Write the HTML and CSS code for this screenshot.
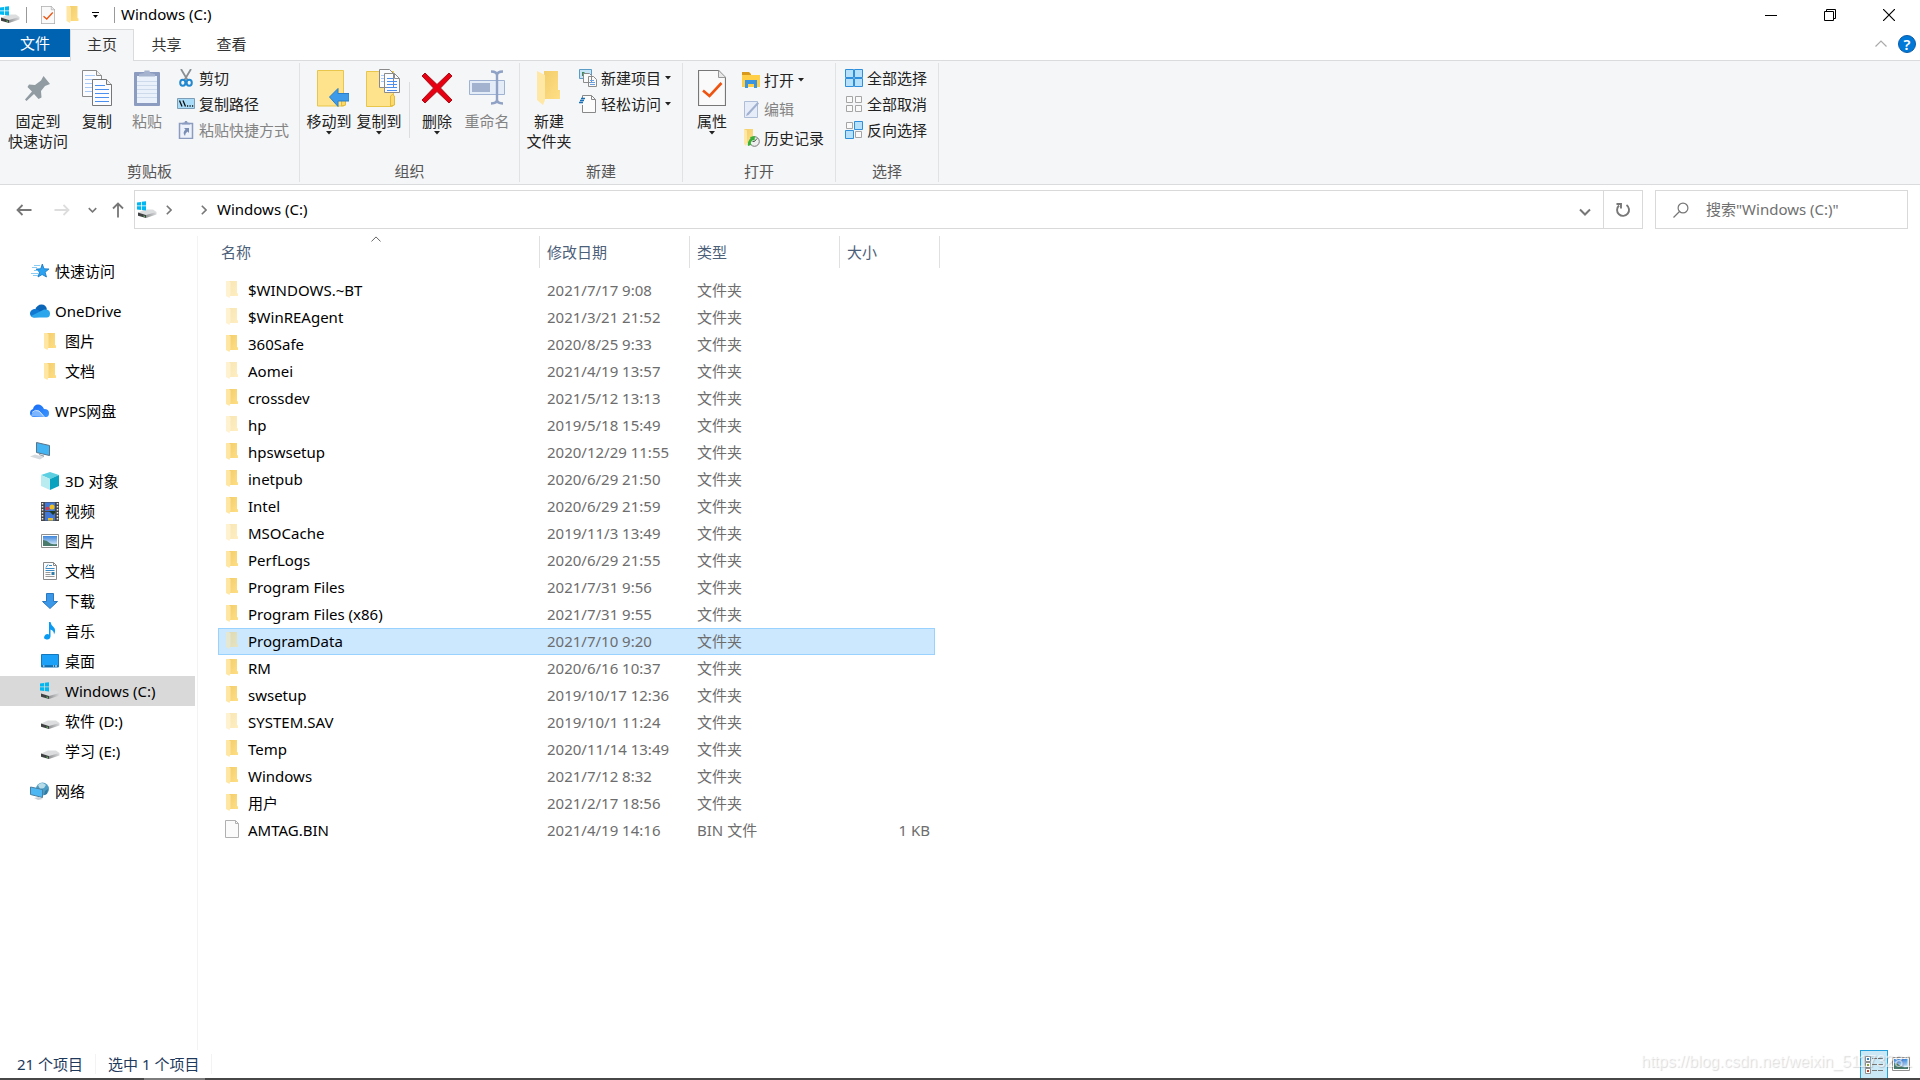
FILE: index.html
```html
<!DOCTYPE html>
<html lang="zh-CN">
<head>
  <meta charset="UTF-8" />
  <meta name="viewport" content="width=device-width, initial-scale=1.0" />
  <title>Windows (C:)</title>
  <link rel="stylesheet" href="styles.css">
</head>
<body>
  <!-- Icon sprite -->
  <svg class="sprite" width="0" height="0" aria-hidden="true">
    <defs>
      <linearGradient id="gFold" x1="0" y1="0" x2="1" y2="1"><stop offset="0" stop-color="#f2cd6c"/><stop offset="1" stop-color="#ffdf85"/></linearGradient>
      <linearGradient id="gDrive" x1="0" y1="0" x2="1" y2="0"><stop offset="0" stop-color="#8f9193"/><stop offset="1" stop-color="#d9dadb"/></linearGradient>
      <linearGradient id="gSky" x1="0" y1="0" x2="0" y2="1"><stop offset="0" stop-color="#3f86dc"/><stop offset="1" stop-color="#e6f4fb"/></linearGradient>
      <linearGradient id="gWps" x1="0" y1="0" x2="1" y2="1"><stop offset="0" stop-color="#1668f5"/><stop offset="1" stop-color="#3b97ff"/></linearGradient>
    </defs>
    <symbol id="drive" viewBox="0 0 20 18">
      <path d="M1 11.5 8 8.5h8l3.5 2.5-8 3.5z" fill="#dcddde"/>
      <path d="M1 11.5v3.200l8 2.300v-3z" fill="#3f4143"/>
      <path d="M9 14v3l10.500-3.500V11z" fill="url(#gDrive)"/>
      <path d="M6.500 14.500l1.500.4v.9l-1.500-.4z" fill="#6fe36a"/>
    </symbol>
    <symbol id="windrive" viewBox="0 0 20 18">
      <use href="#drive" width="20" height="18"/>
      <path d="M0 1.500l4-.6v3.600H0zM4.800.800 9 .2v4.300H4.800zM0 5.300h4v3.600l-4-.5zM4.800 5.300H9v4.300l-4.200-.6z" fill="#00b7f1"/>
    </symbol>
    <symbol id="folder" viewBox="0 0 12 17">
      <path d="M3 0h8v12l1 .5v2.500H4z" fill="url(#gFold)"/>
      <path d="M0 0h3l1.500 1.500V13.500L3.500 17 0 15z" fill="#ffe7a3"/>
    </symbol>
    <symbol id="check" viewBox="0 0 28 36">
      <path d="M.5.5h20l7 7v28H.5z" fill="#fafafa" stroke="#777" stroke-width="1.200"/>
      <path d="M20.500.5v7h7" fill="#e8e8e8" stroke="#999"/>
      <path d="M5 20.500l6.500 5.500L23.500 13" fill="none" stroke="#ee5411" stroke-width="2.600"/>
    </symbol>
    <symbol id="page" viewBox="0 0 14 18">
      <path d="M.5.5h10l3 3v14H.5z" fill="#fbfbfb" stroke="#b0b0b0"/>
      <path d="M10.500.5v3h3" fill="none" stroke="#b0b0b0"/>
    </symbol>
    <symbol id="pin" viewBox="0 0 26 26">
      <path d="M18.500 1 25 9l-5 2-4 5 .5 6.500-3 1.500-4.500-5L1.500 26 0 24.500 7 16.500 2.500 12 4 9.500l6 .5 6-4.500z" fill="#909ba2"/>
    </symbol>
    <symbol id="copy" viewBox="0 0 30 36">
      <g fill="#fafcff" stroke="#8b8b8b"><path d="M.5.5h14l5 5v21H.5z"/><path d="M14.500.5v5h5" fill="#eee"/></g>
      <path d="M3 5.500h10M3 9.500h14M3 13.500h14M3 17.500h14M3 21.500h14" stroke="#a8c8f5"/>
      <g fill="#fafcff" stroke="#777"><path d="M10.500 9.500h14l5 5v21h-19z"/><path d="M24.500 9.500v5h5" fill="#eee"/></g>
      <path d="M13 15.500h10M13 19.500h14M13 23.500h14M13 27.500h14M13 31.500h14" stroke="#4a8ef0"/>
    </symbol>
    <symbol id="paste" viewBox="0 0 26 36">
      <rect y="2" width="26" height="34" rx="1" fill="#8b9cc0"/>
      <path d="M3 6h20v27H3z" fill="#eaf1fa"/>
      <path d="M3 11.500h20M3 15.500h20M3 19.500h20M3 23.500h20M3 27.500h20" stroke="#cddaec"/>
      <path d="M5 6.500V4l5-1 .5-2.500h5L16 3l5 1v2.500z" fill="#a5b3cf"/>
    </symbol>
    <symbol id="cut" viewBox="0 0 18 18">
      <path d="M4 0l6.500 11M14 0 7.500 11" stroke="#8a8f94" stroke-width="1.800"/>
      <g fill="none" stroke="#2288cf" stroke-width="2"><ellipse cx="5.800" cy="13.800" rx="2.600" ry="3"/><ellipse cx="12.200" cy="13.800" rx="2.600" ry="3"/></g>
    </symbol>
    <symbol id="path" viewBox="0 0 18 18">
      <path d="M.5 3.500h17v10H.5z" fill="#a9dcf8" stroke="#7c9db5"/>
      <path d="M2.500 5.500l2.500 6M6 5.500l2.500 6M10 11h1.200M12.500 11h1.200M15 11h1.200" stroke="#111" stroke-width="1.300"/>
    </symbol>
    <symbol id="shortcut" viewBox="0 0 18 18">
      <path d="M2.500 2.500h13v15h-13z" fill="#edf2fa" stroke="#8b9cc0" stroke-width="1.500"/>
      <path d="M5 3.500V2l2.500-.5L8 0h2l.5 1.500L13 2v1.500z" fill="#8b9cc0"/>
      <path d="M7 7h5v5l-1.500-1.500Q8 12 8 15 5 11.500 8.500 8.500z" fill="#7a8db5"/>
    </symbol>
    <symbol id="move" viewBox="0 0 32 37">
      <path d="M.5.5h26v31l2-1V35l-2 1H.5z" fill="#fee28c" stroke="#e8c64b"/>
      <path d="M24.500 36V25q2-3 4 0v10z" fill="#fcd96d" stroke="#e2bc3d"/>
      <path d="M12.500 27 21 18.500v5h11v7.500H21v5.500z" fill="#3d9be9" stroke="#2b7fc8"/>
    </symbol>
    <symbol id="copyto" viewBox="0 0 34 38">
      <path d="M.5 2.500h27v33l-1 2H.5z" fill="#fee28c" stroke="#e8c64b"/>
      <path d="M24.500 37V27q2-3 4 0v9z" fill="#fcd96d" stroke="#e2bc3d"/>
      <g fill="#fafcff" stroke="#8a8a8a"><path d="M13.500.5h10l4 4v14h-14zM18.500 4.500h10l5 5v14h-15z"/></g>
      <path d="M28.500 4.500v5h5" fill="none" stroke="#8a8a8a"/>
      <path d="M21 9.500h6M21 12.500h10M21 15.500h10M21 18.500h10M21 21.500h10" stroke="#4a8ef0"/>
      <path d="M15 6.500h3M15 9.500h3M15 12.500h3" stroke="#a8c8f5"/>
    </symbol>
    <symbol id="del" viewBox="0 0 32 32">
      <path d="M4 1 16 12.500 28 1l3 3-11.500 12L31 28l-3 3L16 19.500 4 31l-3-3L12.500 16 1 4z" fill="#e60012" stroke="#a31018"/>
    </symbol>
    <symbol id="rename" viewBox="0 0 36 36">
      <path d="M.5 10.500h35v14H.5z" fill="#e4ecf8" stroke="#9fb2d3"/>
      <path d="M3 13h18v9H3z" fill="#a3b2cf"/>
      <path d="M22 1.500q6 0 6 4v24q0 4-6 4M34 1.500q-6 0-6 4v24q0 4 6 4" fill="none" stroke="#8fa1c4" stroke-width="2.400"/>
    </symbol>
    <symbol id="bigfolder" viewBox="0 0 25 36">
      <path d="M7 1h14v19h2v9H7z" fill="url(#gFold)"/>
      <path d="M0 1l8 4v25l-2 5-6-5z" fill="#ffe8a6"/>
    </symbol>
    <symbol id="newitem" viewBox="0 0 18 18">
      <path d="M.5.5h12v9H.5z" fill="#c6e6f7" stroke="#5a9cc5"/><path d="M3 7V3h2.500v4z" fill="#3d8a5c"/>
      <g fill="#fafafa" stroke="#8b8b8b"><path d="M4.500 4.500h6l2 2v7h-8zM9.500 7.500h5l3 3v7h-8z"/></g>
      <path d="M11 11.500h4M11 13.500h5M11 15.500h5" stroke="#6a9fe0"/>
    </symbol>
    <symbol id="easy" viewBox="0 0 18 18">
      <path d="M3.500 3V.5h9l4 4v13h-13V10" fill="#fcfcfc" stroke="#888"/><path d="M12.500.5v4h4" fill="none" stroke="#888"/>
      <path d="M2 3.500h4M1 5.500h4M0 7.500h4" stroke="#1a6fb5" stroke-width="1.300"/>
    </symbol>
    <symbol id="open" viewBox="0 0 18 18">
      <path d="M0 2h7l2 2h9v12H0z" fill="#ffcf48"/><path d="M0 1h7l2 2v1H0z" fill="#d99a1c"/>
      <path d="M3 9h12v8h-3v-4H6v4H3z" fill="#3c93de"/>
    </symbol>
    <symbol id="edit" viewBox="0 0 18 18">
      <path d="M2.500 1.500h13v16h-13z" fill="#e6edf8" stroke="#aebdd8"/><path d="M15.500 2 17 3.500 6.500 15 4 16l1-2.500z" fill="#a0b0cf"/>
    </symbol>
    <symbol id="history" viewBox="0 0 18 18">
      <path d="M2 0h9v14H4z" fill="url(#gFold)"/><path d="M2 0l3 1.500V15l-1 2-2-2z" fill="#ffe8a6"/>
      <circle cx="12.500" cy="12.500" r="4.800" fill="#eee" stroke="#777"/><path d="M12.500 12.500l2.500-3M12.500 12.500h-2" stroke="#555"/>
      <path d="M6 17q-1-5 3-7.500l-1-1.500 5-1-.5 5-1.500-1q-3 2-2 5z" fill="#35b235"/>
    </symbol>
    <symbol id="selall" viewBox="0 0 18 18">
      <g fill="#b7e1fb" stroke="#2f8fdb"><path d="M.5.500h8v8h-8zM9.500.500h8v8h-8zM.5 9.500h8v8h-8zM9.500 9.500h8v8h-8z"/></g>
    </symbol>
    <symbol id="selnone" viewBox="0 0 18 18">
      <g fill="#fafafa" stroke="#a5a5a5"><path d="M1.500 1.500h6v6h-6zM10.500 1.500h6v6h-6zM1.500 10.500h6v6h-6zM10.500 10.500h6v6h-6z"/></g>
    </symbol>
    <symbol id="selinv" viewBox="0 0 18 18">
      <g fill="#fafafa" stroke="#a5a5a5"><path d="M1.500 1.500h6v6h-6zM10.500 10.500h6v6h-6z"/></g>
      <g fill="#b7e1fb" stroke="#2f8fdb"><path d="M9.500.500h8v8h-8zM.5 9.500h8v8h-8z"/></g>
    </symbol>
    <symbol id="star" viewBox="0 0 20 18">
      <path d="M12.300 2l1.700 4.800 5 .2-3.900 3.200L16.500 15l-4.400-2.500L8 15l1.500-4.900-3.400-3 4.600-.3z" fill="#2ba3f0" stroke="#1176c4" stroke-width=".8"/>
      <path d="M4 3.500h6M2 5.500h5M4 8.500h4M1 11.500h7M3 13.500h5" stroke="#6dbff2" stroke-width=".8"/>
    </symbol>
    <symbol id="onedrive" viewBox="0 0 20 14">
      <path d="M5 6Q7 .5 11.500.5T17 5.500L9 9z" fill="#0a64b8"/><path d="M4 13.500q-4-.5-4-4T4 5q3-.5 5 1.500l6 6z" fill="#1279d3"/>
      <path d="M4 13.500q-2 0-3-1.500l13-6.500q6-.5 6 4t-4 4z" fill="#2ba5ec"/>
    </symbol>
    <symbol id="wps" viewBox="0 0 20 14">
      <path d="M4 13q-4-.3-4-4 0-3 3-4Q4 .5 8 .5t6 4.500q5 0 5 4T16 13z" fill="url(#gWps)"/>
      <path d="M1 12Q3 6 8 6.500q3 .5 6 6.500z" fill="#7db6ff"/>
      <path d="M2 8.500q3-3.500 7-1.500l5.500 6" fill="none" stroke="#e6f1ff" stroke-width=".8"/>
    </symbol>
    <symbol id="pc" viewBox="0 0 20 18">
      <path d="M6.500.5l13 3v10l-13-3z" fill="#44b4f2" stroke="#5a7388"/><path d="M0 14.500l5-2 9 2.500-4 2.500z" fill="#d5dade"/><path d="M9 12l5 1.500v1.500l-5-2z" fill="#98a4ad"/>
    </symbol>
    <symbol id="cube" viewBox="0 0 18 18">
      <path d="M9 0l9 3-9 4-9-4z" fill="#5cd0e0"/><path d="M0 3l9 4v11l-9-4z" fill="#b9ecf1"/><path d="M18 3 9 7v11l9-4z" fill="#0ba2bf"/>
    </symbol>
    <symbol id="video" viewBox="0 0 18 19">
      <path d="M0 0h18v19H0z" fill="#474747"/><path d="M4 .5h10v8.500H4zM4 10h10v8.500H4z" fill="#4178d8"/>
      <path d="M1.500 1v18M16.500 1v18" stroke="#eee" stroke-dasharray="1.500 1.500" stroke-width="1.500"/>
      <circle cx="11" cy="5" r="2.500" fill="#eebf25"/><circle cx="6.500" cy="6.500" r="1.800" fill="#d9374a"/><path d="M8 9h6v2l-2 2z" fill="#1e3d24"/><path d="M7 16h5v2.500H7z" fill="#e8c02e"/>
    </symbol>
    <symbol id="pic" viewBox="0 0 18 14">
      <path d="M.5.500h17v13H.5z" fill="#fff" stroke="#909090"/><path d="M2 2h14v10H2z" fill="url(#gSky)"/><path d="M2 6q4 0 6 2.500t8 1.500v2H2z" fill="#4a7a6c"/>
    </symbol>
    <symbol id="doc" viewBox="0 0 14 18">
      <path d="M.5.500h10l3 3v14H.5z" fill="#fcfcfc" stroke="#888"/><path d="M10.500.5v3h3" fill="none" stroke="#888"/>
      <path d="M3 5.500 5 2.500M6 3.500h3M2.500 6.500h9M2.500 8.500h9" stroke="#3a8ac5"/><path d="M2.500 10.500h5M2.500 12.500h5M2.500 14.500h9" stroke="#999"/><path d="M8.500 10h3v3h-3z" fill="#2f7eaa"/>
    </symbol>
    <symbol id="down" viewBox="0 0 16 16">
      <path d="M4.500.5h7v8h4L8 15.500.5 8.500h4z" fill="#3b97e8" stroke="#2a78c0"/>
    </symbol>
    <symbol id="music" viewBox="0 0 12 18">
      <path d="M5 0h1.500q.5 3 3 5 3 3 .5 7.500 0-4-3.500-5V14.500Q6 18 2.500 17.500T.5 14 5 12.500z" fill="#0a9af2"/>
    </symbol>
    <symbol id="desk" viewBox="0 0 18 14">
      <path d="M.5.500h17v12.500H.5z" fill="#1ba1f8" stroke="#1279bd"/><path d="M1 12h16" stroke="#0b4d7c"/><path d="M2 12h1.500M12 12h1M14 12h2" stroke="#fff"/>
    </symbol>
    <symbol id="net" viewBox="0 0 20 18">
      <circle cx="12.500" cy="7" r="6.500" fill="#4b9cc4"/><path d="M8 3q4-4 8 0l-2 3-4 1z" fill="#b8dbe8"/><path d="M15 9l3-2-1 5-3 1z" fill="#2f7ba3"/><path d="M.5 5l12 2.500v8l-12-3z" fill="#4db7f3" stroke="#4a7f9f"/><path d="M4 16l5-1 4 2-5 1z" fill="#c9d0d5"/>
    </symbol>
    <symbol id="details" viewBox="0 0 18 18">
      <path d="M.5.500h5v5h-5zM.5 6.500h5v5h-5zM.5 12.500h5v5h-5z" fill="#fff" stroke="#909090"/>
      <path d="M2 3h2" stroke="#2b82d9" stroke-width="2"/><path d="M2 9h2" stroke="#85a32e" stroke-width="2"/><path d="M2 15h2" stroke="#c63d22" stroke-width="2"/>
      <path d="M7 2.500h5M13 2.500h5M7 8.500h5M13 8.500h5M7 14.500h5M13 14.500h5" stroke="#777"/>
    </symbol>
    <symbol id="back" viewBox="0 0 16 12"><path d="M15.500 6H1.500M6.500 1l-5 5 5 5" fill="none" stroke="currentColor" stroke-width="1.800"/></symbol>
    <symbol id="fwd" viewBox="0 0 16 12"><path d="M.5 6h14M9.500 1l5 5-5 5" fill="none" stroke="currentColor" stroke-width="1.800"/></symbol>
    <symbol id="up" viewBox="0 0 12 16"><path d="M6 15.500V1.500M1 6.500l5-5 5 5" fill="none" stroke="currentColor" stroke-width="1.800"/></symbol>
    <symbol id="chev" viewBox="0 0 12 8"><path d="M1 1.500l5 5 5-5" fill="none" stroke="currentColor" stroke-width="2"/></symbol>
    <symbol id="chevup" viewBox="0 0 12 7"><path d="M.5 6.500 6 1l5.500 5.500" fill="none" stroke="currentColor" stroke-width="1.200"/></symbol>
    <symbol id="next" viewBox="0 0 6 10"><path d="M.8.8 5 5 .8 9.200" fill="none" stroke="currentColor" stroke-width="1.600"/></symbol>
    <symbol id="arrow" viewBox="0 0 6 4"><path d="M0 0h6L3 3.500z" fill="#222"/></symbol>
  </svg>

  <header class="titlebar">
    <svg class="app-icon" width="20" height="18"><use href="#windrive"/></svg>
    <span class="bar"></span>
    <button class="quick" aria-label="属性"><svg width="14" height="18"><use href="#check"/></svg></button>
    <button class="quick" aria-label="新建文件夹"><svg width="13" height="17"><use href="#folder"/></svg></button>
    <button class="quick" aria-label="自定义快速访问工具栏"><svg width="8" height="8" viewBox="0 0 8 8"><path d="M0 1.500h7" stroke="#000"/><path d="M1 4h5L3.500 7z"/></svg></button>
    <span class="bar"></span>
    <h1>Windows (C:)</h1>
    <div class="window-buttons">
      <button aria-label="最小化"><svg width="12" height="12"><path d="M0 6.500h12" stroke="#000"/></svg></button>
      <button aria-label="还原"><svg width="12" height="12"><path d="M.5 2.500h9v9h-9zM2.500 2V.5h9v9H10" fill="none" stroke="#000"/></svg></button>
      <button aria-label="关闭"><svg width="12" height="12"><path d="M0 0l12 12M12 0 0 12" stroke="#000" stroke-width="1.200"/></svg></button>
    </div>
  </header>

  <div class="tabs">
    <button class="tab file">文件</button>
    <button class="tab active">主页</button>
    <button class="tab">共享</button>
    <button class="tab">查看</button>
    <div class="tab-tools">
      <button aria-label="最小化功能区"><svg width="12" height="7"><use href="#chevup"/></svg></button>
      <button class="help" aria-label="帮助">?</button>
    </div>
  </div>

  <div class="ribbon">
    <section class="group">
      <div class="tools">
        <button class="big wide"><svg width="26" height="26"><use href="#pin"/></svg>固定到<br>快速访问</button>
        <button class="big"><svg width="30" height="36"><use href="#copy"/></svg>复制</button>
        <button class="big off"><svg width="26" height="36"><use href="#paste"/></svg>粘贴</button>
        <div class="stack">
          <button><svg width="18" height="18"><use href="#cut"/></svg>剪切</button>
          <button><svg width="18" height="18"><use href="#path"/></svg>复制路径</button>
          <button class="off"><svg width="18" height="18"><use href="#shortcut"/></svg>粘贴快捷方式</button>
        </div>
      </div>
      <h2>剪贴板</h2>
    </section>
    <section class="group">
      <div class="tools">
        <button class="big"><svg width="40" height="37" viewBox="-8 0 40 37"><use href="#move" width="32" height="37"/></svg>移动到<svg class="drop" width="6" height="4"><use href="#arrow"/></svg></button>
        <button class="big"><svg width="42" height="38" viewBox="-8 0 42 38"><use href="#copyto" width="34" height="38"/></svg>复制到<svg class="drop" width="6" height="4"><use href="#arrow"/></svg></button>
        <span class="divider"></span>
        <button class="big"><svg width="32" height="32"><use href="#del"/></svg>删除<svg class="drop" width="6" height="4"><use href="#arrow"/></svg></button>
        <button class="big off"><svg width="36" height="36"><use href="#rename"/></svg>重命名</button>
      </div>
      <h2>组织</h2>
    </section>
    <section class="group">
      <div class="tools">
        <button class="big"><svg width="25" height="36"><use href="#bigfolder"/></svg>新建<br>文件夹</button>
        <div class="stack">
          <button><svg width="18" height="18"><use href="#newitem"/></svg>新建项目<svg width="6" height="4"><use href="#arrow"/></svg></button>
          <button><svg width="18" height="18"><use href="#easy"/></svg>轻松访问<svg width="6" height="4"><use href="#arrow"/></svg></button>
        </div>
      </div>
      <h2>新建</h2>
    </section>
    <section class="group">
      <div class="tools">
        <button class="big"><svg width="28" height="36"><use href="#check"/></svg>属性<svg class="drop" width="6" height="4"><use href="#arrow"/></svg></button>
        <div class="stack loose">
          <button><svg width="18" height="18"><use href="#open"/></svg>打开<svg width="6" height="4"><use href="#arrow"/></svg></button>
          <button class="off"><svg width="18" height="18"><use href="#edit"/></svg>编辑</button>
          <button><svg width="18" height="18"><use href="#history"/></svg>历史记录</button>
        </div>
      </div>
      <h2>打开</h2>
    </section>
    <section class="group">
      <div class="tools">
        <div class="stack">
          <button><svg width="18" height="18"><use href="#selall"/></svg>全部选择</button>
          <button><svg width="18" height="18"><use href="#selnone"/></svg>全部取消</button>
          <button><svg width="18" height="18"><use href="#selinv"/></svg>反向选择</button>
        </div>
      </div>
      <h2>选择</h2>
    </section>
  </div>

  <div class="navrow">
    <div class="history">
      <button aria-label="后退"><svg width="16" height="12"><use href="#back"/></svg></button>
      <button class="faded" aria-label="前进"><svg width="16" height="12"><use href="#fwd"/></svg></button>
      <button class="slim" aria-label="最近浏览的位置"><svg width="9" height="6"><use href="#chev"/></svg></button>
      <button class="slim" aria-label="上移"><svg width="12" height="16"><use href="#up"/></svg></button>
    </div>
    <div class="address">
      <svg width="20" height="18"><use href="#windrive"/></svg>
      <svg class="sep" width="6" height="10"><use href="#next"/></svg>
      <svg class="sep far" width="6" height="10"><use href="#next"/></svg>
      <a href="#">Windows (C:)</a>
      <button class="expand" aria-label="以前的位置"><svg width="12" height="8"><use href="#chev"/></svg></button>
      <button class="refresh" aria-label="刷新"><svg width="16" height="16" viewBox="0 0 16 16"><path d="M11.500 3A6 6 0 1 1 4 3.500M1.500 2h4.500v4.500" fill="none" stroke="#777" stroke-width="1.900"/></svg></button>
    </div>
    <label class="search">
      <svg width="16" height="16" viewBox="0 0 16 16"><path d="M.5 15.500 7 9" stroke="#777" stroke-width="1.200"/><circle cx="10" cy="6" r="4.900" fill="none" stroke="#777" stroke-width="1.200"/></svg>
      <input type="text" placeholder='搜索"Windows (C:)"' aria-label="搜索">
    </label>
  </div>

  <main>
    <nav class="sidebar">
      <ul>
        <li><a href="#"><svg width="20" height="18"><use href="#star"/></svg>快速访问</a></li>
      </ul>
      <ul>
        <li><a href="#"><svg width="20" height="14"><use href="#onedrive"/></svg>OneDrive</a></li>
        <li><a class="sub" href="#"><svg width="20" height="17"><use href="#folder"/></svg>图片</a></li>
        <li><a class="sub" href="#"><svg width="20" height="17"><use href="#folder"/></svg>文档</a></li>
      </ul>
      <ul>
        <li><a href="#"><svg width="20" height="14"><use href="#wps"/></svg>WPS网盘</a></li>
      </ul>
      <ul>
        <li><a href="#" aria-label="此电脑"><svg width="20" height="18"><use href="#pc"/></svg></a></li>
        <li><a class="sub" href="#"><svg width="20" height="18"><use href="#cube"/></svg>3D 对象</a></li>
        <li><a class="sub" href="#"><svg width="20" height="19"><use href="#video"/></svg>视频</a></li>
        <li><a class="sub" href="#"><svg width="20" height="14"><use href="#pic"/></svg>图片</a></li>
        <li><a class="sub" href="#"><svg width="20" height="18"><use href="#doc"/></svg>文档</a></li>
        <li><a class="sub" href="#"><svg width="20" height="16"><use href="#down"/></svg>下载</a></li>
        <li><a class="sub" href="#"><svg width="20" height="18"><use href="#music"/></svg>音乐</a></li>
        <li><a class="sub" href="#"><svg width="20" height="14"><use href="#desk"/></svg>桌面</a></li>
        <li><a class="sub current" href="#"><svg width="20" height="18"><use href="#windrive"/></svg>Windows (C:)</a></li>
        <li><a class="sub" href="#"><svg width="20" height="18"><use href="#drive"/></svg>软件 (D:)</a></li>
        <li><a class="sub" href="#"><svg width="20" height="18"><use href="#drive"/></svg>学习 (E:)</a></li>
      </ul>
      <ul>
        <li><a href="#"><svg width="20" height="18"><use href="#net"/></svg>网络</a></li>
      </ul>
    </nav>

    <div class="files">
      <table>
        <colgroup><col class="c-name"><col class="c-date"><col class="c-type"><col class="c-size"><col class="c-end"></colgroup>
        <thead>
          <tr><th>名称<svg class="sort" width="10" height="6"><use href="#chevup"/></svg></th><th>修改日期</th><th>类型</th><th colspan="2">大小</th></tr>
        </thead>
        <tbody>
          <tr class="hidden-item"><td><svg width="14" height="17"><use href="#folder"/></svg>$WINDOWS.~BT</td><td>2021/7/17 9:08</td><td>文件夹</td><td></td></tr>
          <tr class="hidden-item"><td><svg width="14" height="17"><use href="#folder"/></svg>$WinREAgent</td><td>2021/3/21 21:52</td><td>文件夹</td><td></td></tr>
          <tr><td><svg width="14" height="17"><use href="#folder"/></svg>360Safe</td><td>2020/8/25 9:33</td><td>文件夹</td><td></td></tr>
          <tr class="hidden-item"><td><svg width="14" height="17"><use href="#folder"/></svg>Aomei</td><td>2021/4/19 13:57</td><td>文件夹</td><td></td></tr>
          <tr><td><svg width="14" height="17"><use href="#folder"/></svg>crossdev</td><td>2021/5/12 13:13</td><td>文件夹</td><td></td></tr>
          <tr class="hidden-item"><td><svg width="14" height="17"><use href="#folder"/></svg>hp</td><td>2019/5/18 15:49</td><td>文件夹</td><td></td></tr>
          <tr><td><svg width="14" height="17"><use href="#folder"/></svg>hpswsetup</td><td>2020/12/29 11:55</td><td>文件夹</td><td></td></tr>
          <tr><td><svg width="14" height="17"><use href="#folder"/></svg>inetpub</td><td>2020/6/29 21:50</td><td>文件夹</td><td></td></tr>
          <tr><td><svg width="14" height="17"><use href="#folder"/></svg>Intel</td><td>2020/6/29 21:59</td><td>文件夹</td><td></td></tr>
          <tr class="hidden-item"><td><svg width="14" height="17"><use href="#folder"/></svg>MSOCache</td><td>2019/11/3 13:49</td><td>文件夹</td><td></td></tr>
          <tr><td><svg width="14" height="17"><use href="#folder"/></svg>PerfLogs</td><td>2020/6/29 21:55</td><td>文件夹</td><td></td></tr>
          <tr><td><svg width="14" height="17"><use href="#folder"/></svg>Program Files</td><td>2021/7/31 9:56</td><td>文件夹</td><td></td></tr>
          <tr><td><svg width="14" height="17"><use href="#folder"/></svg>Program Files (x86)</td><td>2021/7/31 9:55</td><td>文件夹</td><td></td></tr>
          <tr class="hidden-item selected"><td><svg width="14" height="17"><use href="#folder"/></svg>ProgramData</td><td>2021/7/10 9:20</td><td>文件夹</td><td></td></tr>
          <tr><td><svg width="14" height="17"><use href="#folder"/></svg>RM</td><td>2020/6/16 10:37</td><td>文件夹</td><td></td></tr>
          <tr><td><svg width="14" height="17"><use href="#folder"/></svg>swsetup</td><td>2019/10/17 12:36</td><td>文件夹</td><td></td></tr>
          <tr class="hidden-item"><td><svg width="14" height="17"><use href="#folder"/></svg>SYSTEM.SAV</td><td>2019/10/1 11:24</td><td>文件夹</td><td></td></tr>
          <tr><td><svg width="14" height="17"><use href="#folder"/></svg>Temp</td><td>2020/11/14 13:49</td><td>文件夹</td><td></td></tr>
          <tr><td><svg width="14" height="17"><use href="#folder"/></svg>Windows</td><td>2021/7/12 8:32</td><td>文件夹</td><td></td></tr>
          <tr><td><svg width="14" height="17"><use href="#folder"/></svg>用户</td><td>2021/2/17 18:56</td><td>文件夹</td><td></td></tr>
          <tr><td><svg width="14" height="18"><use href="#page"/></svg>AMTAG.BIN</td><td>2021/4/19 14:16</td><td>BIN 文件</td><td>1 KB</td></tr>
        </tbody>
      </table>
    </div>
  </main>

  <footer class="status">
    <span>21 个项目</span>
    <span>选中 1 个项目</span>
    <div class="views">
      <button class="on" aria-label="详细信息"><svg width="18" height="18"><use href="#details"/></svg></button>
      <button aria-label="大图标"><svg width="18" height="14"><use href="#pic"/></svg></button>
    </div>
    <div class="watermark">https://blog.csdn.net/weixin_51173281</div>
  </footer>
  <div class="taskbar-edge"><span></span></div>
</body>
</html>
```
FILE: styles.css
```css
* {
  box-sizing: border-box;
}

body {
  margin: 0;
  height: 100vh;
  display: flex;
  flex-direction: column;
  overflow: hidden;
  background: #fff;
  color: #000;
  font-family: "Noto Sans", "Noto Sans CJK SC", sans-serif;
  font-size: 15px;
  line-height: 20px;
}

.sprite {
  flex: none;
  display: block;
}

button {
  border: 0;
  padding: 0;
  background: none;
  font: inherit;
  color: inherit;
}

a {
  color: inherit;
  text-decoration: none;
}

h1, h2 {
  margin: 0;
  font-size: 15px;
  font-weight: 400;
}

svg {
  flex: none;
}

/* Title bar */
.titlebar {
  display: flex;
  align-items: center;
  height: 29px;
}

.titlebar .bar {
  width: 1px;
  height: 16px;
  margin: 0 6px;
  background: #999;
}

.titlebar h1 {
  padding-bottom: 2px;
}

.quick {
  display: flex;
  justify-content: center;
  align-items: center;
  width: 24px;
  height: 24px;
}

.quick:nth-of-type(1) {
  margin-left: 3px;
}

.window-buttons {
  display: flex;
  margin-left: auto;
  padding-right: 2px;
  align-self: stretch;
}

.window-buttons button {
  width: 59px;
  display: flex;
  justify-content: center;
  align-items: center;
}

/* Tabs */
.tabs {
  display: flex;
  height: 32px;
  border-bottom: 1px solid #dadbdc;
}

.tab {
  width: 65px;
  height: 31px;
  padding-bottom: 2px;
  color: #333;
}

.tab.file {
  width: 70px;
  height: 28px;
  padding: 0;
  background: #0063b1;
  color: #fff;
}

.tab.active {
  width: 64px;
  height: 32px;
  border: 1px solid #dadbdc;
  border-bottom: 0;
  padding-bottom: 4px;
  background: #f5f6f7;
}

.tab-tools {
  display: flex;
  align-items: center;
  gap: 11px;
  margin-left: auto;
  padding: 0 4px 2px 0;
  color: #aaa;
}

.tab-tools button {
  display: flex;
  justify-content: center;
  align-items: center;
}

.tab-tools .help {
  width: 18px;
  height: 18px;
  border: 1px solid #0a5ca8;
  border-radius: 50%;
  background: #0078d7;
  color: #fff;
  font-weight: 600;
}

/* Ribbon */
.ribbon {
  display: flex;
  padding: 2px 0;
  border-bottom: 1px solid #dadbdc;
  background: #f5f6f7;
}

.group {
  display: flex;
  flex-direction: column;
  justify-content: space-between;
  height: 119px;
  padding-bottom: 1px;
  border-right: 1px solid #e1e2e4;
  color: #222;
}

.group h2 {
  text-align: center;
  color: #555;
}

.tools {
  display: flex;
  padding: 2px 11px 0 4px;
}

.group:nth-child(1) .tools {
  padding-right: 10px;
}

.group:nth-child(2) .tools {
  padding-right: 7px;
}

.big {
  position: relative;
  display: grid;
  grid-template-rows: 46px;
  justify-items: center;
  align-items: center;
  align-content: start;
  width: 50px;
  white-space: nowrap;
}

.big.wide {
  width: 68px;
}

.off {
  color: #838383;
}

.big .drop {
  position: absolute;
  top: 66px;
  left: 22px;
}

.divider {
  width: 1px;
  height: 56px;
  margin: 17px 2px 0 5px;
  background: #dcdde0;
}

.stack {
  display: flex;
  flex-direction: column;
  padding-left: 5px;
}

.stack button {
  display: flex;
  align-items: center;
  gap: 4px;
  height: 26px;
}

.stack.loose button {
  height: 29px;
}

/* Address row */
.navrow {
  display: flex;
  padding: 5px 12px 7px;
  color: #777;
}

.history {
  display: flex;
  align-items: center;
  width: 122px;
}

.history button {
  display: flex;
  justify-content: center;
  width: 24px;
  margin-right: 14px;
}

.history .faded {
  margin-right: 6px;
  color: #ddd;
}

.history .slim {
  margin-right: 2px;
}

.address {
  flex: 1;
  display: flex;
  align-items: center;
  height: 39px;
  padding-left: 2px;
  border: 1px solid #d9d9d9;
  color: #000;
}

.address .sep {
  margin-left: 9px;
  color: #777;
}

.address .far {
  margin-left: 29px;
}

.address a {
  margin-left: 10px;
  padding-bottom: 2px;
}

.expand {
  width: 36px;
  margin-left: auto;
  color: #777;
}

.refresh {
  display: flex;
  justify-content: center;
  align-items: center;
  align-self: stretch;
  width: 39px;
  border-left: 1px solid #d9d9d9;
}

.search {
  display: flex;
  align-items: center;
  gap: 17px;
  width: 253px;
  margin-left: 12px;
  padding-left: 17px;
  border: 1px solid #d9d9d9;
}

.search input {
  min-width: 0;
  width: 100%;
  padding: 0 0 2px;
  border: 0;
  outline: 0;
  font: inherit;
}

.search input::placeholder {
  color: #707070;
}

/* Main area */
main {
  flex: 1;
  display: flex;
  min-height: 0;
}

.sidebar {
  width: 198px;
  padding: 20px 2px 0 0;
  border-right: 1px solid #f3f3f3;
}

.sidebar ul {
  margin: 0 0 10px;
  padding: 0;
  list-style: none;
}

.sidebar a {
  display: flex;
  align-items: center;
  gap: 5px;
  height: 30px;
  padding-left: 30px;
}

.sidebar .sub {
  padding-left: 40px;
}

.sidebar .current {
  background: #d9d9d9;
}

.files {
  flex: 1;
  padding-left: 20px;
}

table {
  table-layout: fixed;
  width: 722px;
  border-collapse: separate;
  border-spacing: 0;
}

.c-name { width: 322px; }
.c-date { width: 150px; }
.c-type { width: 150px; }
.c-size { width: 95px; }
.c-end { width: 5px; }

th {
  position: relative;
  height: 32px;
  padding: 0 0 0 7px;
  border-right: 1px solid #e0e0e0;
  color: #4c607a;
  font-weight: 400;
  text-align: left;
}

th:first-child {
  padding-left: 3px;
}

.sort {
  position: absolute;
  top: 0;
  left: 153px;
  color: #666;
}

tbody::before {
  content: "";
  display: block;
  height: 9px;
}

td {
  height: 27px;
  padding: 0 0 2px 7px;
  color: #6d6d6d;
}

td:first-child {
  padding-left: 7px;
  color: #000;
}

td:nth-child(4) {
  padding-right: 5px;
  text-align: right;
}

td svg {
  margin-right: 9px;
  vertical-align: -2px;
}

.hidden-item svg {
  opacity: 0.5;
}

.selected td {
  border: solid #99d1ff;
  border-width: 1px 0;
  background: #cce8ff;
}

.selected td:first-child {
  border-left-width: 1px;
  padding-left: 6px;
}

.selected td:last-child {
  border-right-width: 1px;
}

/* Status bar */
.status {
  position: relative;
  display: flex;
  align-items: center;
  height: 28px;
  padding: 0 6px 0 5px;
  color: #1e395b;
}

.status > span {
  padding: 0 12px;
  border-right: 1px solid #f3f3f3;
}

.views {
  display: flex;
  align-self: stretch;
  margin-left: auto;
}

.views button {
  display: flex;
  justify-content: center;
  align-items: center;
  width: 26px;
}

.views .on {
  width: 28px;
  border: 1px solid #26a0da;
  border-bottom: 0;
  background: #cbe8f6;
}

.watermark {
  position: absolute;
  right: 8px;
  top: 2px;
  color: rgba(255, 255, 255, 0.6);
  font: 16px/20px "Liberation Sans", sans-serif;
  text-shadow: 1px 1px 1px rgba(0, 0, 0, 0.15);
}

.taskbar-edge {
  height: 2px;
  background: #474747;
}

.taskbar-edge span {
  display: block;
  width: 61px;
  height: 2px;
  margin-left: 144px;
  background: #7d7d7d;
}
```
